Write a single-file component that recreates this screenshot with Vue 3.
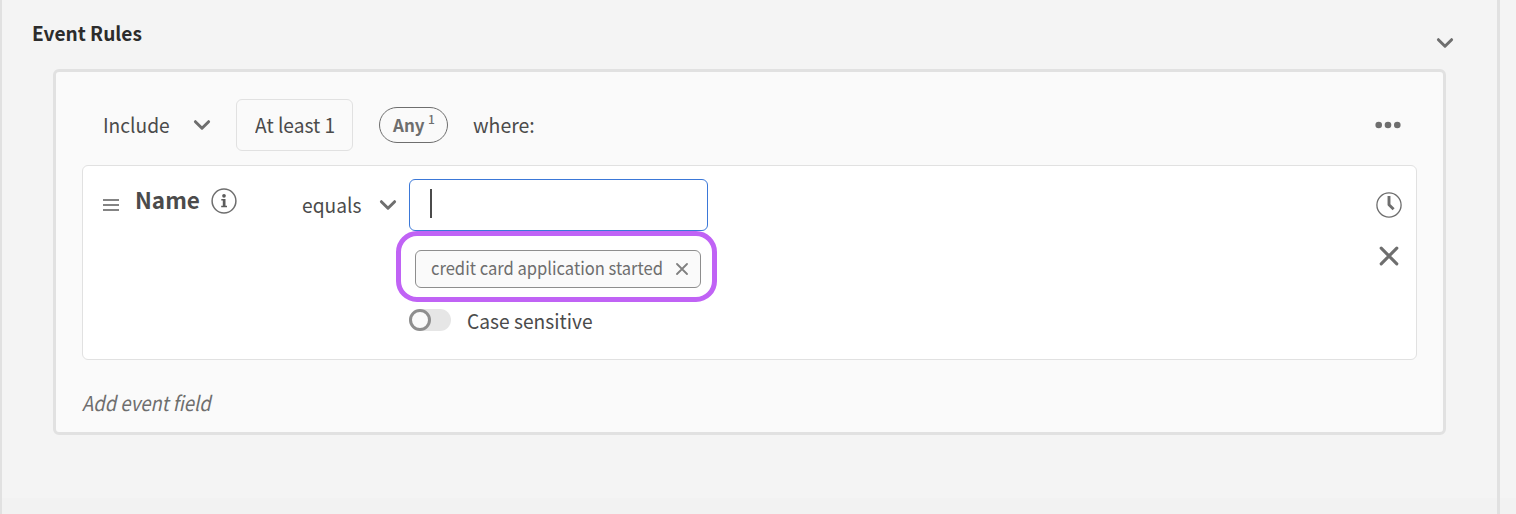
<script setup>
import { ref } from 'vue'

const occurrence = ref('At least 1')
const values = ref(['credit card application started'])
const caseSensitive = ref(false)
</script>

<template>
  <main class="page">
    <section class="panel">
      <header class="panel-head">
        <h2 class="panel-title"><span class="t t-title">Event Rules</span></h2>
        <svg class="chev head-chev" viewBox="0 0 18 12"><path d="M2.4 2.7 9 9.2l6.600-6.500" /></svg>
      </header>

      <div class="rules">
        <div class="summary">
          <span class="t t-include">Include</span>
          <svg class="chev" viewBox="0 0 18 12"><path d="M2.400 2.700 9 9.200l6.600-6.500" /></svg>
          <button class="count"><span class="t t-count">{{ occurrence }}</span></button>
          <span class="pill"><span class="t t-any">Any</span><sup class="t t-sup">1</sup></span>
          <span class="t t-where">where:</span>
          <svg class="dots" viewBox="0 0 26 8">
            <circle cx="3.700" cy="4" r="3.300" /><circle cx="13" cy="4" r="3.300" /><circle cx="22.300" cy="4" r="3.300" />
          </svg>
        </div>

        <div class="field">
          <svg class="grip" viewBox="0 0 16 12"><path d="M0 1h16M0 6h16M0 11h16" /></svg>
          <strong class="t t-name">Name</strong>
          <svg class="info" viewBox="0 0 26 26">
            <circle class="ring" cx="13" cy="13" r="11.900" />
            <circle cx="13" cy="7.800" r="1.850" />
            <path d="M10.300 11h4.200v6.800h1.500v1.500h-5.800v-1.500h1.600v-5.300h-1.500z" />
          </svg>
          <span class="t t-equals">equals</span>
          <svg class="chev field-chev" viewBox="0 0 18 12"><path d="M2.400 2.700 9 9.200l6.600-6.500" /></svg>

          <div class="value">
            <div class="input"><span class="caret"></span></div>
            <div v-for="v in values" :key="v" class="chip">
              <span class="t t-chip">{{ v }}</span>
              <svg class="chip-x" viewBox="0 0 12 12"><path d="M1 1l10 10M11 1 1 11" /></svg>
              <span class="highlight"></span>
            </div>
            <div class="case">
              <span class="toggle" :class="{ on: caseSensitive }"><span class="knob"></span></span>
              <span class="t t-case">Case sensitive</span>
            </div>
          </div>

          <div class="actions">
            <svg class="clock" viewBox="0 0 26 26">
              <circle cx="13" cy="13" r="12.100" />
              <path d="M13 4v8.800l4.600 4.500" />
            </svg>
            <svg class="remove" viewBox="0 0 20 20"><path d="M2.200 2.200l15.600 15.600M17.800 2.200 2.200 17.800" /></svg>
          </div>
        </div>

        <div class="add"><span class="t t-add">Add event field</span></div>
      </div>
    </section>
  </main>
</template>

<style>
body { background: #f4f4f4; }
</style>

<style scoped>
.page {
  height: 514px;
  overflow: hidden;
  background: linear-gradient(#f4f4f4 0 498px, #f2f2f2 498px);
  font-family: "Noto Sans CJK SC", "Open Sans", sans-serif;
  color: #4b4b4b;
}
.page * { box-sizing: border-box; }
.t { display: block; flex: none; white-space: nowrap; line-height: 28px; font-size: 20.5px; transform: scaleX(0.936); transform-origin: 0 50%; }
svg { display: block; flex: none; }
.panel { box-sizing: border-box; width: 1500px; height: 514px; border-left: 2px solid #e1e1e1; border-right: 3px solid #e1e1e1; }
.panel-head { display: flex; justify-content: space-between; height: 69px; padding: 19px 43px 0 30px; }
.panel-title { margin: 0; font-weight: 700; }
.t-title { color: #2c2c2c; font-size: 19.5px; transform: scaleX(0.98); }
.chev { width: 18px; height: 12px; fill: none; stroke: #6e6e6e; stroke-width: 3; stroke-linecap: round; stroke-linejoin: round; }
.head-chev { margin-top: 18px; }

.rules { width: 1393px; height: 366px; margin-left: 51px; border: 3px solid #e1e1e1; border-radius: 6px; background: #fafafa; padding: 0 26px; }
.summary { display: flex; align-items: center; height: 93px; padding: 13px 16px 0 21px; }
.t-include, .t-count, .t-where { padding-bottom: 2px; }
.t-include { width: 90px; }
.count { display: flex; align-items: center; width: 117px; height: 52px; margin: 0 26px 0 25px; padding: 0 0 0 18px; border: 1px solid #e1e1e1; border-radius: 6px; background: #fafafa; color: inherit; font-family: inherit; }
.pill { display: flex; width: 69px; height: 36px; margin-right: 25px; padding-left: 13px; border: 1px solid #6e6e6e; border-radius: 18px; color: #6e6e6e; }
.t-any { width: 35px; padding-top: 3px; font-size: 17px; font-weight: 700; }
.t-any, .t-sup { transform: none; }
.t-sup { font-size: 12px; line-height: 22px; font-weight: 500; }
.t-where { transform: scaleX(0.95); }
.dots { width: 26px; height: 8px; margin-left: auto; fill: #6e6e6e; }

.field { display: flex; align-items: flex-start; width: 1335px; height: 195px; border: 1px solid #e1e1e1; border-radius: 6px; background: #fff; padding: 13px 14px 0 20px; }
.grip { width: 16px; height: 12px; margin: 20px 16px 0 0; stroke: #5c5c5c; stroke-width: 1.6; }
.t-name { width: 77px; margin-top: 6px; font-size: 22.5px; font-weight: 700; transform: none; }
.info { width: 26px; height: 26px; margin-top: 9px; margin-left: -1px; fill: #5c5c5c; }
.info .ring { fill: none; stroke: #6e6e6e; stroke-width: 1.5; }
.t-equals { width: 77px; margin: 11px 0 0 65px; }
.field-chev { margin-top: 20px; }
.value { width: 299px; margin-left: 12px; }
.input { display: flex; height: 52px; padding: 9px 0 0 20px; border: 1px solid #3b78d8; border-radius: 6px; }
.caret { width: 2px; height: 29px; background: #4b4b4b; }
.chip { position: relative; display: flex; align-items: center; width: 286px; height: 38px; margin: 19px 0 0 6px; padding-left: 15px; border: 1px solid #8e8e8e; border-radius: 6px; background: #fafafa; color: #6e6e6e; }
.t-chip { width: 245px; padding-bottom: 4px; font-size: 18px; transform: scaleX(0.92); }
.chip-x { width: 12px; height: 12px; stroke: #808080; stroke-width: 1.8; stroke-linecap: round; }
.highlight { position: absolute; inset: -20px -17px -15px -20px; border: 5px solid #c063f5; border-radius: 21px; pointer-events: none; }
.case { display: flex; align-items: center; margin-top: 18px; }
.toggle { width: 42px; height: 22px; margin-right: 16px; border-radius: 11px; background: #e6e6e6; }
.knob { display: block; width: 22px; height: 22px; border: 3px solid #8e8e8e; border-radius: 50%; background: #fafafa; }
.toggle.on .knob { margin-left: 20px; }
.actions { display: flex; flex-direction: column; align-items: center; margin-left: auto; }
.clock { width: 26px; height: 26px; margin-top: 13px; fill: none; stroke: #6e6e6e; stroke-width: 1.3; }
.clock path { stroke-width: 2.9; stroke-linejoin: round; }
.remove { width: 20px; height: 20px; margin-top: 28px; stroke: #6e6e6e; stroke-width: 3.1; stroke-linecap: round; }

.add { padding: 28px 0 0 2px; }
.t-add { width: max-content; color: #6e6e6e; transform: skewX(-12deg) scaleX(0.9); }
</style>
